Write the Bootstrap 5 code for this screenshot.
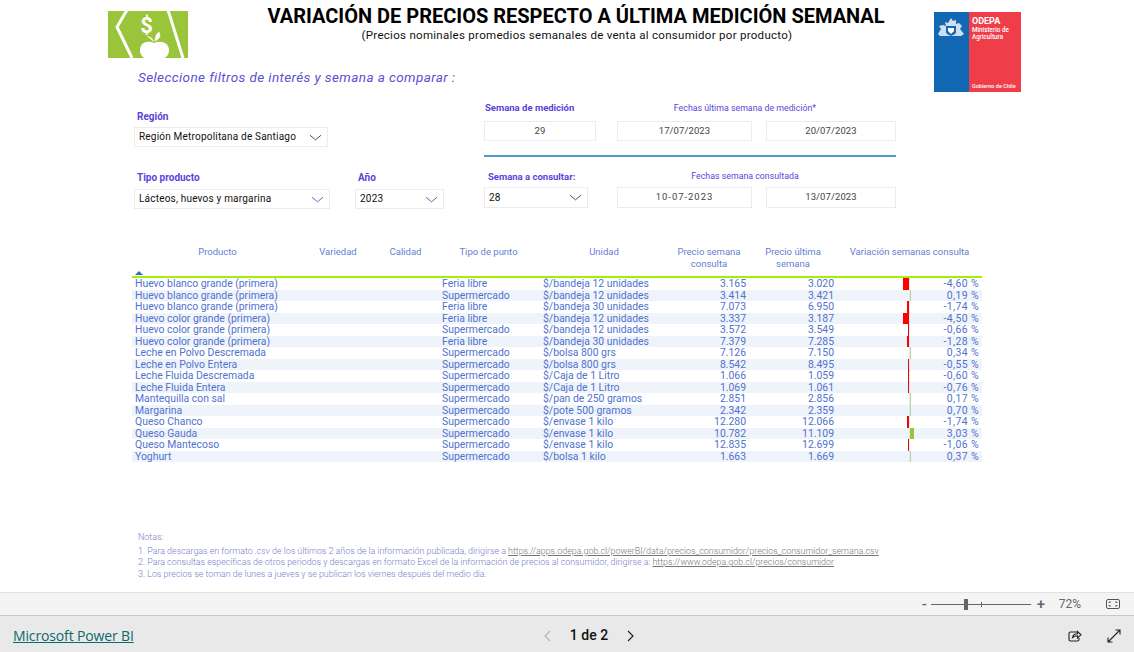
<!DOCTYPE html>
<html lang="es">
<head>
    <meta charset="UTF-8">
    <meta name="viewport" content="width=device-width, initial-scale=1.0">
    <title>Variación de precios</title>
    <link href="https://cdn.jsdelivr.net/npm/bootstrap@5.3.0/dist/css/bootstrap.min.css" rel="stylesheet">
    <style>
        html, body { height: 100%; }
        body { font-family: Roboto, "Liberation Sans", sans-serif; background: #fff; overflow: hidden; }
        .app-shell { height: 652px; }
        .report-page { height: 592px; overflow: hidden; }

        .head-grid { display: grid; grid-template-columns: 80px 1fr 87px; margin: 0 113px 0 108px; padding-top: 11px; height: 92px; }
        .logo-left { width: 80px; height: 47px; display: block; }
        .logo-right { width: 87px; height: 80px; grid-column: 3; grid-row: 1 / span 2; margin-top: 1px; display: flex; }
        .logo-blue { width: 35px; background: #1268b3; padding: 4px 3px; }
        .logo-red { flex: 1; background: #ef3e4a; color: #fff; padding: 4px 0 0 3px; display: flex; flex-direction: column; font-size: 6.3px; line-height: 6.5px; font-weight: 500; }
        .logo-red b { font-size: 9px; line-height: 11px; }
        .logo-red .gob { margin-top: auto; margin-bottom: 3px; font-size: 5.5px; }
        .title-block { text-align: center; padding-left: 30px; margin-top: -7px; }
        .main-title { font-size: 20px; line-height: 24px; font-weight: 700; color: #000; margin: 0; }
        .sub-title { font-size: 11.5px; line-height: 14px; color: #111; letter-spacing: .025em; padding-left: 2px; }
        .pick-title { grid-column: 1 / span 2; font-size: 13.5px; line-height: 16px; font-style: italic; color: #5b4fd2; letter-spacing: .03em; margin: 4px 0 0 30px; white-space: nowrap; }

        .filter-area { margin-left: 134px; height: 154px; }
        .filter-left { width: 350px; padding-top: 18px; }
        .filter-right { width: 412px; padding-top: 9px; }
        .lbl { font-size: 10px; line-height: 13px; font-weight: 700; color: #5a45d8; white-space: nowrap; padding-left: 3px; }
        .lbl-week { font-size: 9.5px; line-height: 13px; font-weight: 700; color: #5a45d8; white-space: nowrap; }
        .lbl-light { grid-column: 2 / span 2; font-size: 8.8px; line-height: 13px; color: #5a45d8; text-align: center; white-space: nowrap; padding-right: 30px; }
        .lbl-low { padding-top: 1px; line-height: 12px; }
        .pick-box { height: 20px; border: 1px solid #ececec; background: #fff; color: #111; font-size: 10px; line-height: 18px; padding: 0 4px; letter-spacing: .02em; display: flex; align-items: center; justify-content: space-between; white-space: nowrap; }
        .pick-box svg { width: 13px; height: 7px; flex: none; margin-right: 1px; }
        .read-box { height: 20px; border: 1px solid #ececec; color: #444; font-size: 9.5px; line-height: 18px; text-align: center; letter-spacing: .01em; }
        .read-spaced { letter-spacing: .1em; }
        .date-grid { display: grid; grid-template-columns: 112px 135px 130px; column-gap: 21px; }
        .date-grid > :nth-child(3) { margin-left: -7px; width: 130px; }
        .w-region { width: 194px; }
        .w-tipo { width: 196px; }
        .w-anio { width: 89px; margin-left: 25px; }
        .gap-tipo { margin-top: 24px; }
        .box-gap { margin-top: 5px; }
        .box-gap-top { margin-top: 7px; }
        .sep-line { height: 2px; background: #4a9fd0; margin: 14px 0 13px; }
        .first-week { padding-left: 1px; }
        .second-week { padding-left: 4px; }
        .week-tall { height: 21px; }

        .table-wrap { margin-left: 132px; width: 850px; }
        .price-table { table-layout: fixed; width: 850px; margin: 0; font-size: 10.4px; --bs-table-color: #4f72cf; --bs-table-bg: transparent; }
        .price-table > :not(caption) > * > * { padding: 0 3px; line-height: 11.5px; height: 11.53px; color: #4f72cf; white-space: nowrap; overflow: hidden; vertical-align: middle; }
        .price-table thead th { height: 31px; font-weight: 400; font-size: 9.5px; text-align: center; vertical-align: top; line-height: 11.5px; color: #6580d2; white-space: normal; padding-top: 0; border-bottom: 2px solid #a4f000; position: relative; }
        .price-table tbody tr:nth-child(even) { --bs-table-bg: #eff3fa; }
        .sort-mark { position: absolute; left: 3px; bottom: 1px; width: 0; height: 0; border-left: 4px solid transparent; border-right: 4px solid transparent; border-bottom: 4px solid #2f6fc0; }
        .var-cell { display: flex; height: 11.53px; }
        .neg-side { width: 70px; flex: none; display: flex; justify-content: flex-end; border-right: 1px dotted #cfe0f5; }
        .pos-side { width: 5px; flex: none; }
        .var-bar { height: 100%; display: block; }
        .bar-neg { background: #f00; }
        .bar-pos { background: #9ac43a; }
        .bar-tiny { background: #b9d69a; }
        .var-val { flex: 1; text-align: right; letter-spacing: .04em; }

        .notes-box { margin: 70px 0 0 138px; font-size: 8.9px; line-height: 11.5px; font-weight: 300; color: #777ecb; white-space: nowrap; }
        .notes-box a { color: #777; }
        .notes-title { margin-bottom: 2px; }

        .zoom-bar { height: 24px; background: #f4f4f4; border-top: 1px solid #e2e2e2; border-bottom: 1px solid #c8c8c8; color: #666; padding-right: 14px; }
        .zoom-track { width: 100px; height: 1px; background: #666; position: relative; margin: 0 6px 0 3px; }
        .zoom-thumb { position: absolute; left: 33px; top: -5px; width: 4px; height: 11px; background: #666; }
        .zoom-tick { position: absolute; left: 50px; top: -2px; width: 1px; height: 5px; background: #666; }
        .zoom-sign { font-size: 15px; line-height: 14px; width: 7px; text-align: center; font-weight: 500; }
        .zoom-pct { font-size: 12px; margin: 0 25px 0 15px; }
        .foot-bar { height: 36px; background: #e9e9e9; padding-top: 3px; }
        .foot-side { width: 360px; }
        .foot-left { width: 404px; }
        .pbi-link { color: #0b6a6a; font-size: 14px; font-family: "Open Sans", Roboto, sans-serif; margin-left: 13px; letter-spacing: -.01em; }
        .page-count { font-size: 14px; color: #111; font-weight: 500; margin: 0 19px; }
        .foot-icons { padding-right: 13px; gap: 25px; }
    </style>
</head>
<body>
<div class="app-shell d-flex flex-column">
    <div class="report-page">
        <div class="head-grid">
            <svg class="logo-left" viewBox="0 0 80 47">
                <rect width="80" height="47" fill="#9ac43a"/>
                <path d="M19 -1 L9 16 L24 47" fill="none" stroke="#fff" stroke-width="3"/>
                <path d="M60 -1 L75 47" fill="none" stroke="#fff" stroke-width="3"/>
                <text x="38.500" y="21.500" font-family="Roboto, sans-serif" font-size="22" font-weight="700" fill="#fff" text-anchor="middle">$</text>
                <path d="M46 32c-6-3-14-1-14 7 0 4 2 7 5 8h19c3-1 5-4 5-8 0-8-9-10-15-7z" fill="#fff"/>
                <path d="M46 31c-1-3-3-5-7-6M47 30c0-5 2-8 4-9 2 3 1 7-4 9z" fill="#fff" stroke="#fff" stroke-width=".5"/>
            </svg>
            <div class="title-block">
                <h1 class="main-title">VARIACIÓN DE PRECIOS RESPECTO A ÚLTIMA MEDICIÓN SEMANAL</h1>
                <div class="sub-title">(Precios nominales promedios semanales de venta al consumidor por producto)</div>
            </div>
            <div class="logo-right">
                <div class="logo-blue">
                    <svg viewBox="0 0 29 24" width="29" height="24">
                        <path d="M14 1l2 3 3-1 0 4 3-1 3 3-2 3 4 5-3 2H3l-2-2 3-5-2-3 4-1 3 1-1-4 3 1z" fill="#cfdff0"/>
                        <path d="M9 9h10v6c0 2-3 3-5 4-2-1-5-2-5-4z" fill="#1268b3"/>
                        <path d="M11 11h6v3l-3 3-3-3z" fill="#fff"/>
                    </svg>
                </div>
                <div class="logo-red">
                    <b>ODEPA</b>
                    <span>Ministerio de</span>
                    <span>Agricultura</span>
                    <span class="gob">Gobierno de Chile</span>
                </div>
            </div>
            <div class="pick-title">Seleccione filtros de interés y semana a comparar :</div>
        </div>

        <div class="filter-area d-flex">
            <div class="filter-left">
                <div class="lbl">Región</div>
                <div class="pick-box w-region mt-1">Región Metropolitana de Santiago
                    <svg viewBox="0 0 14 7"><path d="M1 1l6 5 6-5" fill="none" stroke="#444"/></svg></div>
                <div class="d-flex gap-tipo">
                    <div class="w-tipo">
                        <div class="lbl">Tipo producto</div>
                        <div class="pick-box box-gap">Lácteos, huevos y margarina
                            <svg viewBox="0 0 14 7"><path d="M1 1l6 5 6-5" fill="none" stroke="#3a6ea5"/></svg></div>
                    </div>
                    <div class="w-anio">
                        <div class="lbl">Año</div>
                        <div class="pick-box box-gap">2023
                            <svg viewBox="0 0 14 7"><path d="M1 1l6 5 6-5" fill="none" stroke="#3a6ea5"/></svg></div>
                    </div>
                </div>
            </div>
            <div class="filter-right">
                <div class="date-grid">
                    <div class="lbl-week first-week">Semana de medición</div>
                    <div class="lbl-light lbl-low">Fechas última semana de medición*</div>
                </div>
                <div class="date-grid box-gap-top">
                    <div class="read-box">29</div>
                    <div class="read-box">17/07/2023</div>
                    <div class="read-box">20/07/2023</div>
                </div>
                <div class="sep-line"></div>
                <div class="date-grid">
                    <div class="lbl-week second-week">Semana a consultar:</div>
                    <div class="lbl-light">Fechas semana consultada</div>
                </div>
                <div class="date-grid mt-1">
                    <div class="pick-box week-tall me-2">28
                        <svg viewBox="0 0 14 7"><path d="M1 1l6 5 6-5" fill="none" stroke="#444"/></svg></div>
                    <div class="read-box week-tall read-spaced">10-07-2023</div>
                    <div class="read-box week-tall">13/07/2023</div>
                </div>
            </div>
        </div>

        <div class="table-wrap">
            <table class="table table-borderless price-table">
                <colgroup>
                    <col style="width:171px"><col style="width:70px"><col style="width:65px"><col style="width:101px">
                    <col style="width:130px"><col style="width:80px"><col style="width:88px"><col style="width:145px">
                </colgroup>
                <thead>
                    <tr>
                        <th>Producto<span class="sort-mark"></span></th><th>Variedad</th><th>Calidad</th><th>Tipo de punto</th>
                        <th>Unidad</th><th>Precio semana consulta</th><th>Precio última semana</th><th>Variación semanas consulta</th>
                    </tr>
                </thead>
                <tbody id="priceRows"></tbody>
            </table>
        </div>

        <div class="notes-box">
            <div class="notes-title">Notas:</div>
            <div>1. Para descargas en formato <i>.csv</i> de los últimos 2 años de la información publicada, dirigirse a <a href="#">https://apps.odepa.gob.cl/powerBI/data/precios_consumidor/precios_consumidor_semana.csv</a></div>
            <div>2. Para consultas específicas de otros periodos y descargas en formato Excel de la información de precios al consumidor, dirigirse a: <a href="#">https://www.odepa.gob.cl/precios/consumidor</a></div>
            <div>3. Los precios se toman de lunes a jueves y se publican los viernes después del medio día.</div>
        </div>
    </div>

    <div class="zoom-bar d-flex align-items-center justify-content-end">
        <span class="zoom-sign">-</span>
        <div class="zoom-track"><span class="zoom-thumb"></span><span class="zoom-tick"></span></div>
        <span class="zoom-sign">+</span>
        <span class="zoom-pct">72%</span>
        <svg width="14" height="10" viewBox="0 0 14 10" fill="none" stroke="#555"><rect x=".5" y=".5" width="13" height="9" rx="1.5"/><path d="M3 4V3h2M11 4V3H9M3 6v1h2M11 6v1H9"/></svg>
    </div>
    <div class="foot-bar d-flex align-items-center justify-content-between">
        <div class="foot-left"><a class="pbi-link" href="#">Microsoft Power BI</a></div>
        <div class="d-flex align-items-center">
            <svg width="8" height="12" viewBox="0 0 8 12" fill="none" stroke="#b5b5b5" stroke-width="1.2"><path d="M7 1L2 6l5 5"/></svg>
            <span class="page-count">1 de 2</span>
            <svg width="8" height="12" viewBox="0 0 8 12" fill="none" stroke="#222" stroke-width="1.2"><path d="M1 1l5 5-5 5"/></svg>
        </div>
        <div class="foot-side foot-icons d-flex justify-content-end align-items-center">
            <svg width="14" height="14" viewBox="0 0 14 14" fill="none" stroke="#222" stroke-width="1.1"><path d="M9 3H2.500A1.500 1.500 0 0 0 1 4.500v6A1.500 1.500 0 0 0 2.500 12h7a1.500 1.500 0 0 0 1.500-1.500V9"/><path d="M4.500 8.500C5 6 7 4.800 9.500 4.800V2.500L13 5.800 9.500 9V6.800C7.500 6.800 5.800 7.300 4.500 8.500z"/></svg>
            <svg width="14" height="14" viewBox="0 0 14 14" fill="none" stroke="#222" stroke-width="1.1"><path d="M8.500 1H13v4.500M13 1L1 13M1 8.500V13h4.500"/></svg>
        </div>
    </div>
</div>

<script src="https://cdn.jsdelivr.net/npm/bootstrap@5.3.0/dist/js/bootstrap.bundle.min.js"></script>
<script>
    const rows = [
        ['Huevo blanco grande (primera)', 'Feria libre', '$/bandeja 12 unidades', '3.165', '3.020', -4.60],
        ['Huevo blanco grande (primera)', 'Supermercado', '$/bandeja 12 unidades', '3.414', '3.421', 0.19],
        ['Huevo blanco grande (primera)', 'Feria libre', '$/bandeja 30 unidades', '7.073', '6.950', -1.74],
        ['Huevo color grande (primera)', 'Feria libre', '$/bandeja 12 unidades', '3.337', '3.187', -4.50],
        ['Huevo color grande (primera)', 'Supermercado', '$/bandeja 12 unidades', '3.572', '3.549', -0.66],
        ['Huevo color grande (primera)', 'Feria libre', '$/bandeja 30 unidades', '7.379', '7.285', -1.28],
        ['Leche en Polvo Descremada', 'Supermercado', '$/bolsa 800 grs', '7.126', '7.150', 0.34],
        ['Leche en Polvo Entera', 'Supermercado', '$/bolsa 800 grs', '8.542', '8.495', -0.55],
        ['Leche Fluida Descremada', 'Supermercado', '$/Caja de 1 Litro', '1.066', '1.059', -0.60],
        ['Leche Fluida Entera', 'Supermercado', '$/Caja de 1 Litro', '1.069', '1.061', -0.76],
        ['Mantequilla con sal', 'Supermercado', '$/pan de 250 gramos', '2.851', '2.856', 0.17],
        ['Margarina', 'Supermercado', '$/pote 500 gramos', '2.342', '2.359', 0.70],
        ['Queso Chanco', 'Supermercado', '$/envase 1 kilo', '12.280', '12.066', -1.74],
        ['Queso Gauda', 'Supermercado', '$/envase 1 kilo', '10.782', '11.109', 3.03],
        ['Queso Mantecoso', 'Supermercado', '$/envase 1 kilo', '12.835', '12.699', -1.06],
        ['Yoghurt', 'Supermercado', '$/bolsa 1 kilo', '1.663', '1.669', 0.37]
    ];

    let output = '';
    rows.forEach(r => {
        let v = r[5];
        let w = Math.max(Math.abs(v) * 1.3, 1);
        let pct = v.toFixed(2).replace('.', ',') + ' %';
        let neg = v < 0 ? `<span class="var-bar bar-neg" style="width:${w}px"></span>` : '';
        let pos = v >= 0 ? `<span class="var-bar ${v < 1 ? 'bar-tiny' : 'bar-pos'}" style="width:${w}px"></span>` : '';
        output += `
            <tr>
                <td>${r[0]}</td><td></td><td></td><td class="ps-1">${r[1]}</td><td class="ps-1">${r[2]}</td>
                <td class="text-end">${r[3]}</td><td class="text-end">${r[4]}</td>
                <td><div class="var-cell"><div class="neg-side">${neg}</div><div class="pos-side">${pos}</div><div class="var-val">${pct}</div></div></td>
            </tr>`;
    });
    document.getElementById('priceRows').innerHTML = output;
</script>
</body>
</html>
